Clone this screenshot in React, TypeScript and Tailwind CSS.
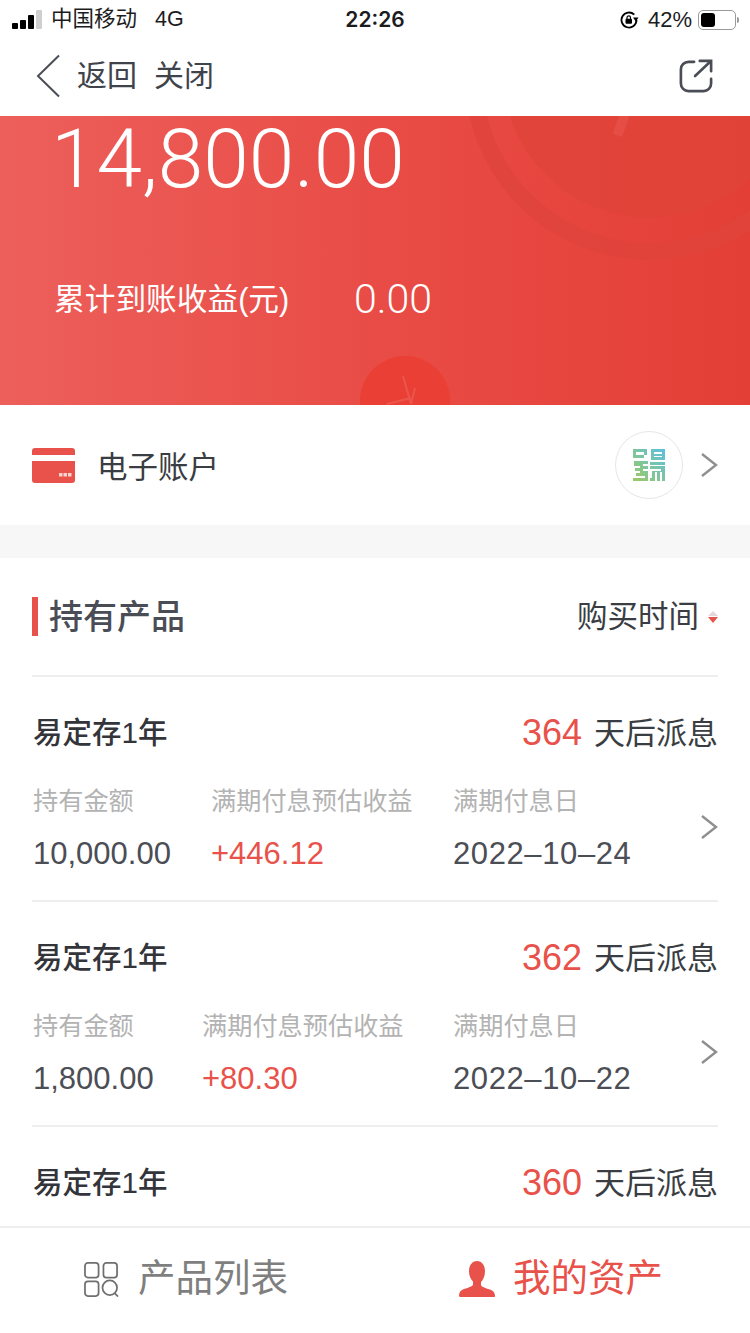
const products = [
  { days: 364, amount: "10,000.00", income: "+446.12", date: "2022–10–24", col1: "w-[178px]", col2: "w-[242px]" },
  { days: 362, amount: "1,800.00", income: "+80.30", date: "2022–10–22", col1: "w-[169px]", col2: "w-[251px]" },
];

const Chevron = ({ className }: { className?: string }) => (
  <svg viewBox="0 0 18 26" className={className} fill="none" stroke="#8f8f8f" strokeWidth="2.4">
    <path d="M2 2l14 11L2 24" />
  </svg>
);

const StatusBar = () => (
  <div className="flex h-[38px] items-center pl-3 pr-[11px] pt-[1px] text-[21.500px] leading-none text-[#1c1c1e]">
    <div className="flex w-[333px] items-center">
      <div className="flex items-end gap-[2px]">
        <span className="h-[6px] w-[6px] rounded-[1px] bg-black" />
        <span className="h-[9px] w-[6px] rounded-[1px] bg-black" />
        <span className="h-[14px] w-[6px] rounded-[1px] bg-black" />
        <span className="h-[19px] w-[6px] rounded-[1px] bg-[#cfcfcf]" />
      </div>
      <span className="ml-[9px]">中国移动</span>
      <span className="ml-[18px]">4G</span>
    </div>
    <span className="w-[60px] whitespace-nowrap text-center font-['Inter'] text-[21px] font-semibold">22:26</span>
    <div className="flex w-[334px] items-center justify-end">
      <svg viewBox="0 0 20 20" className="h-[20px] w-[20px]" fill="none">
        <path d="M17.500 10a7.500 7.500 0 1 1-2.200-5.300" stroke="#000" strokeWidth="1.800" />
        <path d="M14 7.500h5.500l-2.700 4z" fill="#000" />
        <rect x="6.500" y="8.800" width="6.500" height="5" rx="1" fill="#000" />
        <path d="M8 9V7.600a1.750 1.750 0 0 1 3.500 0V9" stroke="#000" strokeWidth="1.200" />
      </svg>
      <span className="ml-[9px] text-[22px]">42%</span>
      <div className="ml-[6px] flex items-center">
        <div className="flex h-[20px] w-[38px] items-center rounded-[5px] border border-[#9a9a9a] p-[2px]">
          <span className="h-[14px] w-[14px] rounded-[3px] bg-black" />
        </div>
        <span className="ml-[1px] h-[6px] w-[2px] rounded-r bg-[#9a9a9a]" />
      </div>
    </div>
  </div>
);

const NavBar = () => (
  <div className="flex h-[78px] items-center justify-between pb-[2px] pl-[36px] pr-[37px] text-[#3f434b]">
    <div className="flex items-center">
      <svg viewBox="0 0 24 44" className="h-[44px] w-[24px]" fill="none" stroke="#4a4d55" strokeWidth="2">
        <path d="M23 1.500L2 22l21 20.500" />
      </svg>
      <span className="ml-[17px] text-[30px] leading-none">返回</span>
      <span className="ml-[17px] text-[30px] leading-none">关闭</span>
    </div>
    <svg viewBox="0 0 36 36" className="h-[34px] w-[34px]" fill="none" stroke="#4a4d55" strokeWidth="2.800" strokeLinecap="round">
      <path d="M16 3H10a8 8 0 0 0-8 8v15a8 8 0 0 0 8 8h16a8 8 0 0 0 8-8v-5" />
      <path d="M17 18L33 3M22 2h12v11" />
    </svg>
  </div>
);

const Hero = () => (
  <div className="relative h-[289px] bg-gradient-to-r from-[#ed5f5b] via-[#e94c46] to-[#e33f36] text-white">
    <div className="absolute inset-0 overflow-hidden">
      <div className="absolute left-[465px] top-[-225px] h-[369px] w-[369px] rounded-full border-[17px] border-[#e0443c]/80" />
      <div className="absolute left-[503px] top-[-192px] h-[294px] w-[294px] rounded-full bg-[#e0433a]/80" />
      <span className="absolute left-[616px] top-[-2px] h-[22px] w-[10px] rotate-[20deg] bg-[#e64d45]" />
      <div className="absolute left-[360px] top-[240px] h-[90px] w-[90px] rounded-full bg-[#ea3f34]" />
      <svg viewBox="0 0 40 40" className="absolute left-[385px] top-[258px] h-[40px] w-[40px]" fill="none" stroke="#ec554b" strokeWidth="2">
        <path d="M18 2l8 28M30 14l-4 16M2 30l24-6" />
      </svg>
    </div>
    <div className="relative pl-[51px]">
      <div className="font-['Roboto'] text-[82px] font-light leading-[86px]">14,800.00</div>
      <div className="mt-[77px] flex items-center pl-[3px]">
        <span className="w-[300px] text-[30.700px] leading-none">累计到账收益(元)</span>
        <span className="pb-[2px] font-['Roboto'] text-[41px] font-light leading-none">0.00</span>
      </div>
    </div>
  </div>
);

const Account = () => (
  <div className="flex h-[120px] items-center pl-[32px] pr-[32px]">
    <svg viewBox="0 0 43 35" className="h-[35px] w-[43px]">
      <path d="M3 0h37a3 3 0 0 1 3 3v4H0V3a3 3 0 0 1 3-3z" fill="#e8524a" />
      <path d="M0 13h43v19a3 3 0 0 1-3 3H3a3 3 0 0 1-3-3z" fill="#e8524a" />
      <rect x="27" y="25" width="3.500" height="3.500" fill="#f8d3d0" />
      <rect x="31.500" y="25" width="3.500" height="3.500" fill="#f8d3d0" />
      <rect x="36" y="25" width="3.500" height="3.500" fill="#f8d3d0" />
    </svg>
    <span className="ml-[22px] pt-[5px] text-[30.500px] leading-none text-[#3a3d42]">电子账户</span>
    <div className="ml-auto flex h-[68px] w-[68px] items-center justify-center rounded-full border border-[#e6e6e6]">
      <svg viewBox="0 0 34 34" className="h-[34px] w-[34px]" fill="none">
        <defs>
          <linearGradient id="qr" x1="0" y1="1" x2="1" y2="0">
            <stop offset="0" stopColor="#9ccb63" />
            <stop offset="1" stopColor="#5cbfe0" />
          </linearGradient>
        </defs>
        <path
          d="M1 1h14v6h-3V4H4v3h8v3H1zM19 1h14v11H19zM22 4v2h8V4zM22 8v1h8V8zM2 13h14v3H11v2h5v3h-5v2h5v10H1v-3h12v-2H4v-3h4v-2H3v-3h5v-2H2zM18 14h15v19h-3V24h-2v9h-3V24h-2v9h-5v-3h2V21h-2v-3h15v-1H18zM20 21v2h9v-2z"
          fill="url(#qr)"
          fillRule="evenodd"
        />
      </svg>
    </div>
    <Chevron className="ml-[17px] h-[26px] w-[18px]" />
  </div>
);

const RowHead = ({ days }: { days: number }) => (
  <div className="flex items-center justify-between pl-[1px] leading-none">
    <span className="text-[29.500px] font-medium text-[#33353a]">易定存1年</span>
    <span className="flex items-center text-[31px] text-[#3a3d42]">
      <span className="mr-[12px] text-[36px] text-[#e8524a]">{days}</span>
      天后派息
    </span>
  </div>
);

const ProductRow = ({ p }: { p: (typeof products)[number] }) => (
  <div className="h-[225px] border-t-2 border-[#eeeeee] pt-[38px]">
    <RowHead days={p.days} />
    <div className="mt-[38px] flex items-center pl-[1px]">
      <div className={p.col1}>
        <div className="text-[25.200px] leading-none text-[#b3b3b3]">持有金额</div>
        <div className="mt-[24px] text-[31px] leading-none text-[#4b4e55]">{p.amount}</div>
      </div>
      <div className={p.col2}>
        <div className="text-[25.200px] leading-none text-[#b3b3b3]">满期付息预估收益</div>
        <div className="mt-[24px] text-[31px] leading-none text-[#e8524a]">{p.income}</div>
      </div>
      <div>
        <div className="text-[25.200px] leading-none text-[#b3b3b3]">满期付息日</div>
        <div className="mt-[24px] text-[31px] leading-none tracking-[0.6px] text-[#4b4e55]">{p.date}</div>
      </div>
      <Chevron className="mb-[5px] ml-auto h-[26px] w-[18px]" />
    </div>
  </div>
);

const TabBar = () => (
  <div className="flex h-[107px] items-center border-t-2 border-[#eeeeee] pb-[3px]">
    <div className="flex flex-1 items-center pl-[84px] text-[#7f7f7f]">
      <svg viewBox="0 0 36 36" className="h-[35px] w-[35px]" fill="none" stroke="#6f6f6f" strokeWidth="1.800">
        <rect x="1" y="1" width="14" height="15" rx="3" />
        <rect x="20" y="1" width="14" height="15" rx="3" />
        <rect x="1" y="20" width="14" height="15" rx="3" />
        <circle cx="26.500" cy="26.500" r="7.500" />
        <path d="M31.500 32l3.500 3.500" />
      </svg>
      <span className="ml-[19px] text-[37.500px] leading-none">产品列表</span>
    </div>
    <div className="flex flex-1 items-center pl-[84px] text-[#e8524a]">
      <svg viewBox="0 0 36 36" className="h-[36px] w-[36px]" fill="#e8524a">
        <path d="M18 0c5 0 8 4.500 8 10.500 0 4.500-2 8.500-4 10.500v3c0 1.500 4 3 9 4.500 3 1 5 3 5 6.500 0 .8-.5 1.500-1.500 1.500h-33C.5 36 0 35.300 0 34.500 0 31 2 29 5 28c5-1.500 9-3 9-4.500v-3C12 18.500 10 15 10 10.500 10 4.500 13 0 18 0z" />
      </svg>
      <span className="ml-[18px] text-[37.500px] leading-none">我的资产</span>
    </div>
  </div>
);

export default function App() {
  return (
    <div className="flex h-[1333px] w-[750px] flex-col overflow-hidden bg-white font-['Liberation_Sans','Noto_Sans_CJK_SC',sans-serif]">
      <StatusBar />
      <NavBar />
      <div className="relative flex-1">
        <Hero />
        <Account />
        <div className="h-[33px] bg-[#f7f7f7]" />
        <div className="px-[32px]">
          <div className="flex h-[117px] items-center justify-between">
            <div className="flex items-center">
              <span className="h-[39px] w-[6px] bg-[#e8524a]" />
              <span className="ml-[11px] text-[34px] font-medium leading-none text-[#4a4d55]">持有产品</span>
            </div>
            <div className="flex items-center">
              <span className="text-[30.500px] leading-none text-[#3a3d42]">购买时间</span>
              <div className="ml-[9px] flex flex-col gap-[1px]">
                <span className="h-0 w-0 border-x-[5px] border-b-[5px] border-x-transparent border-b-[#e5d5d8]" />
                <span className="h-0 w-0 border-x-[5px] border-t-[6px] border-x-transparent border-t-[#e8524a]" />
              </div>
            </div>
          </div>
          {products.map((p) => (
            <ProductRow key={p.days} p={p} />
          ))}
          <div className="border-t-2 border-[#eeeeee] pt-[38px]">
            <RowHead days={360} />
          </div>
        </div>
      </div>
      <TabBar />
    </div>
  );
}
